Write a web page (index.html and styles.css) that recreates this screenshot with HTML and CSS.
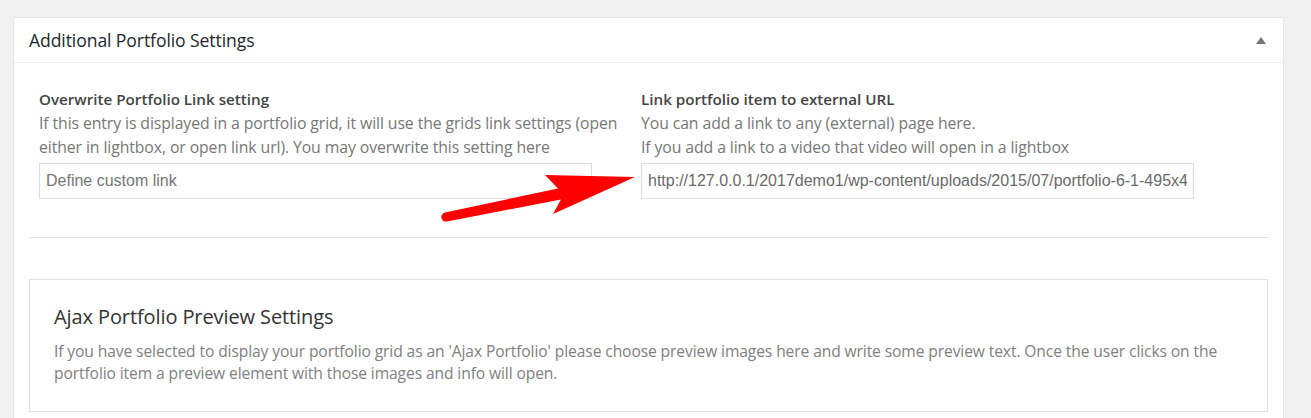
FILE: index.html
```html
<!DOCTYPE html>
<html lang="en">
<head>
<meta charset="utf-8">
<title>Additional Portfolio Settings</title>
<link rel="stylesheet" href="styles.css">
</head>
<body>
<div class="page">
  <div class="postbox">
    <div class="hndle">
      <h2 class="hndle-title">Additional Portfolio Settings</h2>
      <span class="toggle" aria-hidden="true"></span>
    </div>
    <div class="inside">
      <div class="fields">
        <div class="field">
          <div class="field-label">Overwrite Portfolio Link setting</div>
          <div class="field-desc">If this entry is displayed in a portfolio grid, it will use the grids link settings (open either in lightbox, or open link url). You may overwrite this setting here</div>
          <input class="field-input" type="text" placeholder="Define custom link">
        </div>
        <div class="field">
          <div class="field-label">Link portfolio item to external URL</div>
          <div class="field-desc">You can add a link to any (external) page here.<br>If you add a link to a video that video will open in a lightbox</div>
          <input class="field-input" type="text" value="http://127.0.0.1/2017demo1/wp-content/uploads/2015/07/portfolio-6-1-495x400.jpg">
        </div>
      </div>
      <div class="divider"></div>
      <div class="subsection">
        <h3 class="sub-title">Ajax Portfolio Preview Settings</h3>
        <p class="sub-desc">If you have selected to display your portfolio grid as an 'Ajax Portfolio' please choose preview images here and write some preview text. Once the user clicks on the portfolio item a preview element with those images and info will open.</p>
      </div>
    </div>
  </div>
  <svg class="annotation" width="1311" height="418" viewBox="0 0 1311 418" aria-hidden="true">
    <path d="M 445 212.5 L 558 188.5 L 545 175 L 635 177 L 553 214 L 561 199.5 L 447 221.5 A 4.5 4.5 0 0 1 445 212.5 Z" fill="#ff0000"/>
  </svg>
</div>
</body>
</html>
```

FILE: styles.css
```css
* { box-sizing: border-box; }

html, body {
  margin: 0;
  padding: 0;
  background: #f1f1f1;
}

.page {
  position: relative;
  width: 1311px;
  height: 418px;
  overflow: hidden;
  padding: 17px 0 0 13px;
  font-family: "Open Sans", "Liberation Sans", sans-serif;
}

.postbox {
  width: 1271px;
  background: #fff;
  border: 1px solid #e5e5e5;
  box-shadow: 0 1px 1px rgba(0,0,0,0.04);
  min-height: 420px;
}

.hndle {
  height: 45px;
  display: flex;
  align-items: center;
  justify-content: space-between;
  padding: 0 17px 0 15px;
  border-bottom: 1px solid #eee;
}

.hndle-title {
  margin: 0;
  font-size: 17.6px;
  font-weight: 500;
  color: #23282d;
  letter-spacing: -0.1px;
}

.toggle {
  width: 0;
  height: 0;
  border-left: 5px solid transparent;
  border-right: 5px solid transparent;
  border-bottom: 7px solid #72777c;
}

.inside {
  padding: 0 15px;
}

.fields {
  display: grid;
  grid-template-columns: 600px 600px;
  column-gap: 2px;
  padding: 24px 10px 0;
}

.field-label {
  font-size: 15.2px;
  font-weight: 600;
  color: #444;
  line-height: 24px;
}

.field-desc {
  font-size: 15.8px;
  color: #777;
  line-height: 24px;
  letter-spacing: -0.1px;
}

.field-input {
  display: block;
  margin-top: 4px;
  width: 553px;
  height: 36px;
  padding: 0 6px;
  border: 1px solid #ddd;
  background: #fff;
  font-family: "Liberation Sans", Arial, sans-serif;
  font-size: 16px;
  color: #6a6a6a;
  outline: none;
  box-shadow: inset 0 1px 2px rgba(0,0,0,0.03);
}

.field-input::placeholder {
  color: #767676;
  opacity: 1;
}

.divider {
  margin-top: 38px;
  border-top: 1px solid #e1e1e1;
}

.subsection {
  margin-top: 41px;
  border: 1px solid #e1e1e1;
  padding: 23px 24px 27px;
}

.sub-title {
  margin: 0;
  font-size: 20px;
  font-weight: 500;
  line-height: 28px;
  color: #333;
  letter-spacing: -0.1px;
}

.sub-desc {
  margin: 9px 0 0;
  font-size: 15.6px;
  line-height: 22px;
  color: #808080;
  letter-spacing: -0.1px;
}

.annotation {
  position: absolute;
  top: 0;
  left: 0;
  pointer-events: none;
}
```
